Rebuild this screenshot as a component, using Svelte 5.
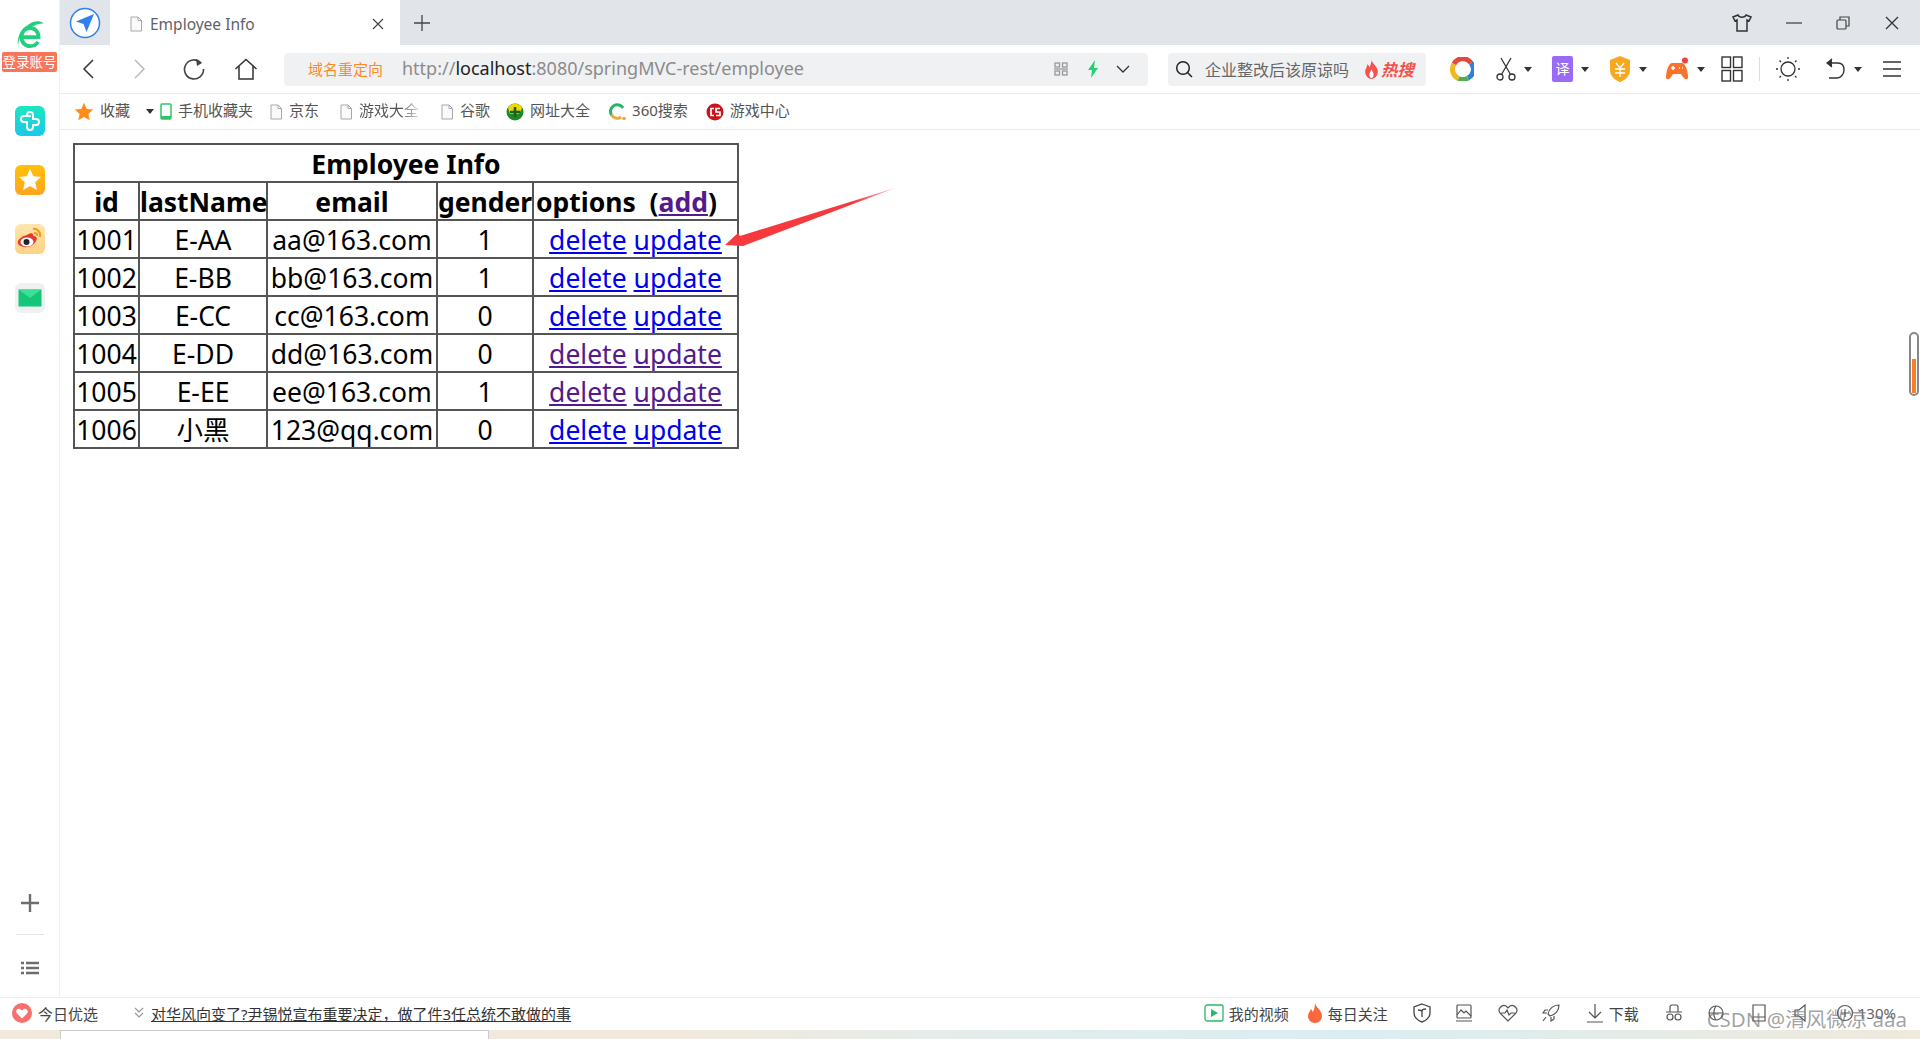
<script>
  const rows = [
    { id: 1001, name: "E-AA", email: "aa@163.com", gender: 1, seen: false },
    { id: 1002, name: "E-BB", email: "bb@163.com", gender: 1, seen: false },
    { id: 1003, name: "E-CC", email: "cc@163.com", gender: 0, seen: false },
    { id: 1004, name: "E-DD", email: "dd@163.com", gender: 0, seen: true },
    { id: 1005, name: "E-EE", email: "ee@163.com", gender: 1, seen: true },
    { id: 1006, name: "小黑", email: "123@qq.com", gender: 0, seen: false }
  ];
</script>

{#snippet doc()}
  <svg class="doc" width="14" height="16" viewBox="0 0 14 16"><path d="M2 1h7l3.500 3.500V15H2z M9 1v3.500h3.500" fill="#fafafa" stroke="#a8a8a8"/></svg>
{/snippet}

{#snippet caret()}
  <svg class="caret" width="8" height="5" viewBox="0 0 8 5"><path d="M0 0h8L4 5z" fill="#333"/></svg>
{/snippet}

<div class="page">
  <div class="body">
    <aside class="side">
      <div class="logo">
        <svg width="32" height="32" viewBox="0 0 30 30">
          <path d="M7.500 16h15.500c0-5-3.500-8.500-8-8.500S7 11 7 16c0 5 3.500 8.500 8 8.500 3.500 0 6-1.500 7.500-4" fill="none" stroke="#22cf7e" stroke-width="3.600"/>
          <path d="M5 28C1 19 10 5 28 3 23 0 18 1 14 4 5 9 1 20 5 28z" fill="#22cf7e"/>
        </svg>
        <span class="login">登录账号</span>
      </div>
      <div class="app teal">
        <svg width="24" height="24" viewBox="0 0 24 24" fill="none" stroke="#fff" stroke-width="2"><path d="M9 7V6a3 3 0 0 1 6 0v4h3a3 3 0 0 1 0 6h-3v2a3 3 0 0 1-6 0v-5H6a3 3 0 0 1 0-6h7"/></svg>
      </div>
      <div class="app amber">
        <svg width="24" height="24" viewBox="0 0 24 24"><path d="M12 1l3.300 7.300 7.700.8-5.800 5.200 1.700 7.700L12 18l-6.900 4 1.700-7.700L1 9.100l7.700-.8z" fill="#fff"/></svg>
      </div>
      <div class="app weibo">
        <svg width="28" height="28" viewBox="0 0 28 28">
          <path d="M11 10c4-3 7-2 6 1 3 0 5 2 3 5-2 4-7 7-12 6-5-1-7-3-6-6 1-2 4-5 9-6z" fill="#e6392d"/>
          <ellipse cx="11" cy="17" rx="6.500" ry="4.500" fill="#fff"/>
          <circle cx="10.500" cy="17" r="3" fill="#222"/>
          <path d="M17 4c4-1 8 3 7 8M18 8c2-.5 3.500 1 3 3" fill="none" stroke="#f59a1c" stroke-width="2"/>
        </svg>
      </div>
      <div class="app mail">
        <svg width="24" height="18" viewBox="0 0 24 18"><rect width="23" height="17" x=".5" y=".5" fill="#15c57a"/><path d="M.5.500h23L12 9z" fill="#3ddf94"/></svg>
      </div>
      <div class="side-foot">
        <svg width="20" height="20" viewBox="0 0 20 20"><path d="M10 1v18M1 10h18" stroke="#6c6c6c" stroke-width="2.400"/></svg>
        <hr />
        <svg width="18" height="14" viewBox="0 0 18 14"><path d="M0 2h3M5 2h13M0 7h3M5 7h13M0 12h3M5 12h13" stroke="#6c6c6c" stroke-width="2.400"/></svg>
      </div>
    </aside>

    <div class="browser">
      <div class="tabs">
        <div class="nav-btn">
          <svg width="32" height="32" viewBox="0 0 32 32"><circle cx="16" cy="16" r="14.500" fill="#fff" stroke="#2f80ed" stroke-width="1.500"/><path d="M25 7L7 14.500l7.500 2.500 3 8z" fill="#2f80ed"/></svg>
        </div>
        <div class="tab">
          {@render doc()}
          <span class="tab-title">Employee Info</span>
          <svg class="tab-x" width="12" height="12" viewBox="0 0 12 12"><path d="M1 1l10 10M11 1L1 11" stroke="#444" stroke-width="1.200"/></svg>
        </div>
        <svg class="plus" width="18" height="18" viewBox="0 0 18 18"><path d="M9 1v16M1 9h16" stroke="#444" stroke-width="1.300"/></svg>
        <div class="win">
          <svg width="20" height="18" viewBox="0 0 20 18" fill="none" stroke="#333" stroke-width="1.500"><path d="M6 1L1 3l2 4 2-1v11h10V6l2 1 2-4-5-2c-1 3-7 3-8 0z"/></svg>
          <svg width="16" height="16" viewBox="0 0 16 16"><path d="M0 8h16" stroke="#444" stroke-width="1.300"/></svg>
          <svg width="14" height="14" viewBox="0 0 14 14" fill="none" stroke="#444" stroke-width="1.200"><rect x="1" y="4" width="9" height="9" rx="1"/><path d="M4 4V1h9v9h-3"/></svg>
          <svg width="16" height="16" viewBox="0 0 16 16"><path d="M2 2l12 12M14 2L2 14" stroke="#333" stroke-width="1.300"/></svg>
        </div>
      </div>

      <div class="toolbar">
        <svg class="back" width="14" height="20" viewBox="0 0 14 20"><path d="M12 1L3 10l9 9" fill="none" stroke="#333" stroke-width="1.500"/></svg>
        <svg class="fwd" width="14" height="20" viewBox="0 0 14 20"><path d="M2 1l9 9-9 9" fill="none" stroke="#bbb" stroke-width="1.500"/></svg>
        <svg class="reload" width="22" height="22" viewBox="0 0 22 22"><path d="M18 5a9.500 9.500 0 1 0 2.500 6" fill="none" stroke="#444" stroke-width="1.600"/><path d="M13 1l6 4-5 3z" fill="#444"/></svg>
        <svg class="home" width="24" height="22" viewBox="0 0 24 22"><path d="M1.500 11L12 1.500 22.500 11M5 8v13h14V8" fill="none" stroke="#333" stroke-width="1.500"/></svg>
        <div class="url">
          <span class="redirect">域名重定向</span>
          <span class="addr">http://<b>localhost</b>:8080/springMVC-rest/employee</span>
          <svg class="qr" width="14" height="14" viewBox="0 0 14 14" fill="none" stroke="#999" stroke-width="1.300"><rect x="1" y="1" width="4.500" height="4"/><rect x="8.500" y="1" width="4.500" height="4"/><rect x="1" y="9" width="4.500" height="4"/><rect x="8.500" y="9" width="4.500" height="4"/><path d="M0 7h14"/></svg>
          <svg class="bolt" width="12" height="18" viewBox="0 0 12 18"><path d="M8 0L1 10h4l-1 8 7-10H7z" fill="#27d170"/></svg>
          <svg class="down" width="14" height="8" viewBox="0 0 14 8"><path d="M1 1l6 6 6-6" fill="none" stroke="#333" stroke-width="1.300"/></svg>
        </div>
        <div class="search">
          <svg width="18" height="18" viewBox="0 0 18 18"><circle cx="8" cy="8" r="6.300" fill="none" stroke="#222" stroke-width="1.500"/><path d="M12.500 12.500L17 17" stroke="#222" stroke-width="1.500"/></svg>
          <span class="query">企业整改后该原谅吗</span>
          <svg width="15" height="19" viewBox="0 0 14 18"><path d="M7 0c1 4 6 6 6 11 0 4-3 7-6 7s-6-3-6-7c0-3 2-4 2-7 1 1 2 2 2 3 1-2 2-4 2-7z" fill="#f4524d"/><path d="M7 9c1 2 2 3 2 5s-1 3-2 3-2-1-2-3 1-3 2-5z" fill="#fff"/></svg>
          <span class="hot">热搜</span>
        </div>
        <div class="tools">
          <svg class="ring" width="24" height="24" viewBox="0 0 24 24" fill="none" stroke-width="5">
            <path d="M4 7a10 10 0 0 1 17-1" stroke="#e2493b"/><path d="M21 6a9.500 9.500 0 0 1-3 15" stroke="#2f7fe0"/><path d="M18 21a9.500 9.500 0 0 1-9.500 .5" stroke="#4fb04f"/><path d="M8.500 21.500A10 10 0 0 1 4 7" stroke="#f2b824"/>
          </svg>
          <div class="tool">
            <svg width="20" height="24" viewBox="0 0 20 24" fill="none" stroke="#333" stroke-width="1.300"><circle cx="4" cy="20" r="3"/><circle cx="16" cy="20" r="3"/><path d="M5.500 17.500L15 1M14.500 17.500L5 1"/></svg>
            {@render caret()}
          </div>
          <div class="tool">
            <span class="trans">译</span>
            {@render caret()}
          </div>
          <div class="tool">
            <svg width="22" height="26" viewBox="0 0 22 26"><path d="M11 0l10 4v10c0 6-5 10-10 12C6 24 1 20 1 14V4z" fill="#f6a821"/><path d="M7 7l4 5 4-5M6 13h10M6 17h10M11 12v9" fill="none" stroke="#fff" stroke-width="1.400"/></svg>
            {@render caret()}
          </div>
          <div class="tool">
            <svg width="24" height="24" viewBox="0 0 24 24"><path d="M7 6h10c4 0 6 10 6 14 0 3-3 3-5 0l-2-3H8l-2 3c-2 3-5 3-5 0C1 16 3 6 7 6z" fill="#f9742a"/><circle cx="20" cy="3.500" r="3" fill="#f0403c"/><path d="M6 11h4M8 9v4M14 11h1M17 11h1" stroke="#fff" stroke-width="1.500"/></svg>
            {@render caret()}
          </div>
          <svg class="grid" width="22" height="26" viewBox="0 0 22 26" fill="none" stroke="#333" stroke-width="1.400"><rect x="1" y="1" width="8.500" height="10.500"/><rect x="12.500" y="1" width="8.500" height="10.500"/><rect x="1" y="14.500" width="8.500" height="10.500"/><rect x="12.500" y="14.500" width="8.500" height="10.500"/></svg>
          <span class="sep"></span>
          <svg class="sun" width="24" height="24" viewBox="0 0 24 24" fill="none" stroke="#333" stroke-width="1.300"><circle cx="12" cy="12" r="7"/><path d="M12 0v2M12 22v2M0 12h2M22 12h2M3.500 3.500l1.500 1.500M19 19l1.500 1.500M3.500 20.500L5 19M19 5l1.500-1.500"/></svg>
          <div class="tool undo">
            <svg width="20" height="24" viewBox="0 0 20 24" fill="none" stroke="#333" stroke-width="1.400"><path d="M4 6h8c4 0 6 3 6 7s-3 8-7 8H3"/><path d="M6 2L1 6l5 4" fill="#333"/></svg>
            {@render caret()}
          </div>
          <svg class="menu" width="18" height="18" viewBox="0 0 18 18"><path d="M0 2h18M0 9h18M0 16h18" stroke="#333" stroke-width="1.400"/></svg>
        </div>
      </div>

      <div class="bookmarks">
        <svg width="20" height="20" viewBox="0 0 24 24"><path d="M12 1l3.300 7.300 7.700.8-5.800 5.200 1.700 7.700L12 18l-6.900 4 1.700-7.700L1 9.100l7.700-.8z" fill="#ff8c1a"/></svg>
        <span class="mark">收藏</span>
        <span class="mini">{@render caret()}</span>
        <svg width="12" height="17" viewBox="0 0 12 17"><rect x="1" y="1" width="10" height="15" rx="1" fill="#fff" stroke="#2ec56b" stroke-width="1.500"/><path d="M1 13h10v3H1z" fill="#2ec56b"/></svg>
        <span class="mark short">手机收藏夹</span>
        {@render doc()}
        <span class="mark wide">京东</span>
        {@render doc()}
        <span class="mark fade wider">游戏大全</span>
        {@render doc()}
        <span class="mark short">谷歌</span>
        <svg width="18" height="18" viewBox="0 0 18 18"><circle cx="9" cy="9" r="8.500" fill="#1c8a22"/><path d="M2 5a8 8 0 0 1 14 0l-3 6H4z" fill="#f0d800"/><path d="M9 4v10M4 9h10" stroke="#1b5e20" stroke-width="2.600"/></svg>
        <span class="mark">网址大全</span>
        <svg width="18" height="18" viewBox="0 0 18 18"><path d="M3.500 12A6.500 6.500 0 0 1 15 5" fill="none" stroke="#27b36a" stroke-width="3"/><path d="M3.500 12A6.500 6.500 0 0 0 13 14" fill="none" stroke="#f3a43a" stroke-width="3"/><circle cx="16" cy="15.500" r="1.800" fill="#f3a43a"/></svg>
        <span class="mark">360搜索</span>
        <svg width="18" height="18" viewBox="0 0 18 18"><circle cx="9" cy="9" r="8.500" fill="#c9141e"/><path d="M8 5.500H5v7h3M14 5.500h-4v3.500h4v3.500h-4" fill="none" stroke="#fff" stroke-width="1.700"/></svg>
        <span class="mark">游戏中心</span>
      </div>

      <main class="content">
        <table>
          <colgroup>
            <col class="c-id" /><col class="c-name" /><col class="c-mail" /><col class="c-gender" /><col />
          </colgroup>
          <thead>
            <tr><th colspan="5">Employee Info</th></tr>
            <tr>
              <th>id</th><th>lastName</th><th>email</th><th>gender</th>
              <th class="opts">options&nbsp; (<a class="seen" href="#add">add</a>)</th>
            </tr>
          </thead>
          <tbody>
            {#each rows as row}
              <tr>
                <td>{row.id}</td>
                <td>{row.name}</td>
                <td>{row.email}</td>
                <td>{row.gender}</td>
                <td>
                  <a class:seen={row.seen} href="#delete">delete</a>
                  <a class:seen={row.seen} href="#update">update</a>
                </td>
              </tr>
            {/each}
          </tbody>
        </table>
        <svg class="arrow" width="172" height="60" viewBox="0 0 172 60">
          <defs>
            <linearGradient id="fade" x1="0" x2="1" y1="0" y2="0">
              <stop offset="0.75" stop-color="#f5393c" />
              <stop offset="1" stop-color="#f5393c" stop-opacity="0.4" />
            </linearGradient>
          </defs>
          <path d="M0 57L13 45 15 48 170 0 18 58z" fill="url(#fade)"/>
        </svg>
        <div class="thumb"><span></span></div>
      </main>
    </div>
  </div>

  <footer class="status">
    <svg class="heart" width="20" height="20" viewBox="0 0 20 20"><circle cx="10" cy="10" r="10" fill="#f8706c"/><path d="M10 15.500L4.800 10.300C3 8 5.500 4.800 8 6c1 .5 2 1.500 2 1.500S11 6.500 12 6c2.500-1.200 5 2 3.200 4.300z" fill="#fff"/></svg>
    <span class="pick">今日优选</span>
    <svg class="dbl" width="10" height="12" viewBox="0 0 10 12"><path d="M1 1l4 4 4-4M1 6l4 4 4-4" fill="none" stroke="#999" stroke-width="1.200"/></svg>
    <a class="news" href="#news">对华风向变了?尹锡悦宣布重要决定，做了件3任总统不敢做的事</a>
    <div class="status-right">
      <svg width="20" height="18" viewBox="0 0 20 18"><rect x="1" y="1" width="18" height="16" rx="2" fill="#fff" stroke="#27b86a" stroke-width="1.300"/><path d="M7 5l7 4-7 4z" fill="#27b86a"/></svg>
      <span class="s-text">我的视频</span>
      <svg class="m18" width="16" height="20" viewBox="0 0 16 20"><path d="M8 0c1 5 7 7 7 13 0 4-3 7-7 7s-7-3-7-7c0-3 2-5 3-7 1 1 1 2 2 3 1-3 2-5 2-9z" fill="#f9683a"/></svg>
      <span class="s-text">每日关注</span>
      <svg class="m25" width="18" height="20" viewBox="0 0 18 20" fill="none" stroke="#444" stroke-width="1.300"><path d="M9 1l8 3v6c0 4-4 8-8 9-4-1-8-5-8-9V4z"/><path d="M9 14V8M5 7c2 0 4 0 4 2M13 6c-2 0-4 0-4 2"/></svg>
      <svg class="m24" width="18" height="20" viewBox="0 0 18 20" fill="none" stroke="#555" stroke-width="1.200"><rect x="2" y="2" width="14" height="13" rx="1"/><path d="M2 12l4-5 3 3 2-2 5 5M1 18h16"/></svg>
      <svg class="m25" width="20" height="18" viewBox="0 0 20 18" fill="none" stroke="#555" stroke-width="1.200"><path d="M10 17L2 9C-1 5 4 0 8 2l2 2 2-2c4-2 9 3 6 7z"/><path d="M3 9h4l2-3 2 5 2-2h4"/></svg>
      <svg class="m24" width="18" height="18" viewBox="0 0 18 18" fill="none" stroke="#555" stroke-width="1.200"><path d="M17 1c-6 0-10 4-11 9l2 2c5-1 9-5 9-11zM6 6H3L1 9h4M12 12v3l-3 2v-4M4 13l-3 4"/></svg>
      <svg class="m26" width="18" height="20" viewBox="0 0 18 20" fill="none" stroke="#555" stroke-width="1.200"><path d="M9 1v13M3 9l6 6 6-6M1 19h16"/></svg>
      <span class="s-text">下载</span>
      <svg class="m26" width="18" height="18" viewBox="0 0 18 18" fill="none" stroke="#555" stroke-width="1.200"><path d="M5 8V3a2 2 0 0 1 2-2h4a2 2 0 0 1 2 2v5M1 8h16"/><circle cx="5" cy="13" r="3"/><circle cx="13" cy="13" r="3"/></svg>
      <svg class="m24" width="18" height="18" viewBox="0 0 18 18" fill="none" stroke="#555" stroke-width="1.200"><circle cx="9" cy="9" r="7"/><path d="M2 9h14M9 2c-3 4-3 10 0 14"/></svg>
      <svg class="m27" width="14" height="18" viewBox="0 0 14 18" fill="none" stroke="#555" stroke-width="1.200"><path d="M1 1h12v16H1zM1 13h12"/></svg>
      <svg class="m28" width="14" height="18" viewBox="0 0 14 18" fill="none" stroke="#555" stroke-width="1.200"><path d="M1 6h4l6-5v16l-6-5H1z"/></svg>
      <svg class="m28" width="18" height="18" viewBox="0 0 18 18" fill="none" stroke="#555" stroke-width="1.200"><circle cx="9" cy="9" r="7.500"/><path d="M9 5v8M5 9h8"/></svg>
      <span class="zoom">130%</span>
    </div>
    <span class="mark-csdn">CSDN @清风微凉 aaa</span>
  </footer>

  <div class="strip"><div class="strip-box"></div></div>
</div>

<style>
  :global(body) {
    margin: 0;
    overflow: hidden;
    background: #fff;
  }
  .page {
    width: 1920px;
    height: 1039px;
    display: flex;
    flex-direction: column;
    font-family: "Noto Sans", "Noto Sans CJK SC", sans-serif;
    color: #555;
  }
  .body {
    flex: 1;
    display: flex;
    min-height: 0;
  }
  .side {
    width: 59px;
    border-right: 1px solid #f0f0f0;
    display: flex;
    flex-direction: column;
    align-items: center;
    box-sizing: content-box;
  }
  .logo {
    height: 72px;
    padding-top: 20px;
    box-sizing: border-box;
    display: flex;
    flex-direction: column;
    align-items: center;
    margin-bottom: 34px;
  }
  .login {
    background: #f97459;
    color: #fff;
    font-size: 13.500px;
    line-height: 20px;
    width: 55px;
    text-align: center;
    white-space: nowrap;
    border-radius: 2px;
  }
  .app {
    width: 30px;
    height: 30px;
    border-radius: 6px;
    display: flex;
    align-items: center;
    justify-content: center;
    margin-bottom: 29px;
  }
  .teal { background: linear-gradient(#1ce6c0, #1bc8ea); }
  .amber { background: linear-gradient(#ffc107, #ffa51f); }
  .weibo { background: linear-gradient(#ffe6b0, #ffd184); }
  .mail { background: #f0f0f0; }
  .side-foot {
    margin-top: auto;
    padding-bottom: 22px;
    display: flex;
    flex-direction: column;
    align-items: center;
  }
  .side-foot hr {
    width: 28px;
    border: 0;
    border-top: 1px solid #e4e4e4;
    margin: 21px 0 26px;
  }

  .browser {
    flex: 1;
    display: flex;
    flex-direction: column;
    min-width: 0;
  }
  .tabs {
    height: 45px;
    background: #e1e4e9;
    display: flex;
    align-items: center;
  }
  .nav-btn {
    width: 50px;
    display: flex;
    justify-content: center;
  }
  .tab {
    width: 290px;
    height: 45px;
    background: #fff;
    display: flex;
    align-items: center;
    padding: 3px 16px 0 19px;
    box-sizing: border-box;
  }
  .tab-title {
    font-size: 15.500px;
    color: #5f6368;
    margin-left: 7px;
    flex: 1;
  }
  .plus {
    margin-left: 13px;
  }
  .win {
    margin-left: auto;
    display: flex;
    align-items: center;
    gap: 34px;
    padding-right: 20px;
  }
  .toolbar {
    height: 48px;
    border-bottom: 1px solid #eaeaea;
    display: flex;
    align-items: center;
    box-sizing: content-box;
  }
  .back { margin-left: 21px; }
  .fwd { margin-left: 38px; }
  .reload { margin-left: 36px; }
  .home { margin-left: 29px; }
  .url {
    width: 864px;
    height: 33px;
    margin-left: 26px;
    background: #f0f1f3;
    border-radius: 4px;
    display: flex;
    align-items: center;
    box-sizing: border-box;
    padding-left: 24px;
  }
  .redirect {
    font-size: 15px;
    color: #ff8a1f;
    width: 94px;
    margin-top: -2px;
  }
  .addr {
    font-size: 18px;
    color: #8b8b8b;
    white-space: nowrap;
    width: 652px;
    margin-top: -2px;
  }
  .addr b {
    font-weight: 400;
    color: #222;
  }
  .bolt { margin-left: 19px; }
  .down { margin-left: 17px; }
  .search {
    width: 258px;
    height: 33px;
    margin-left: 20px;
    background: #f0f1f3;
    border-radius: 4px;
    display: flex;
    align-items: center;
    padding-left: 7px;
    box-sizing: border-box;
  }
  .query {
    font-size: 16px;
    color: #666;
    margin: 0 15px 0 12px;
    white-space: nowrap;
  }
  .hot {
    font-size: 16.500px;
    font-weight: 700;
    font-style: italic;
    color: #f4524d;
    margin-left: 2px;
  }
  .tools {
    display: flex;
    align-items: center;
    margin-left: 24px;
  }
  .tool {
    display: flex;
    align-items: center;
    gap: 8px;
    width: 57px;
    justify-content: center;
  }
  .ring { margin-right: 11px; }
  .trans {
    width: 21px;
    height: 26px;
    background: #9a6cf5;
    color: #fff;
    font-size: 14px;
    line-height: 26px;
    text-align: center;
    border-radius: 2px;
  }
  .grid { margin-left: 8px; }
  .sep {
    width: 1px;
    height: 24px;
    background: #dedede;
    margin: 0 16px;
  }
  .undo { margin-left: 15px; }
  .menu { margin-left: 11px; }
  .bookmarks {
    height: 35px;
    border-bottom: 1px solid #eaeaea;
    display: flex;
    align-items: center;
    padding-left: 14px;
    gap: 6px;
    box-sizing: content-box;
  }
  .mark {
    font-size: 15px;
    line-height: 32px;
    margin-top: -3px;
    color: #555;
    margin-right: 12px;
    white-space: nowrap;
  }
  .short { margin-right: 10px; }
  .wide { margin-right: 14px; }
  .wider { margin-right: 15px; }
  .mini { display: flex; margin: 0 0 0 -2px; }
  .fade {
    color: transparent;
    background: linear-gradient(90deg, #555 70%, #ddd);
    background-clip: text;
    -webkit-background-clip: text;
  }

  .content {
    flex: 1;
    position: relative;
    padding: 13px 0 0 13px;
    min-height: 0;
  }
  table {
    border-collapse: collapse;
    table-layout: fixed;
    width: 666px;
    border: 2px solid #333;
    color: #000;
    font-size: 26.500px;
  }
  th, td {
    border: 2px solid #555;
    height: 34px;
    padding: 2px 0 0;
    text-align: center;
    line-height: 32px;
    white-space: nowrap;
    overflow: visible;
  }
  th { font-weight: 700; }
  th.opts {
    text-align: left;
    padding-left: 2px;
  }
  .c-id { width: 65px; }
  .c-name { width: 128px; }
  .c-mail { width: 170px; }
  .c-gender { width: 96px; }
  a {
    color: #0000ee;
    text-decoration: underline;
  }
  a.seen { color: #551a8b; }
  .arrow {
    position: absolute;
    left: 665px;
    top: 58px;
  }
  .thumb {
    position: absolute;
    right: 1px;
    top: 202px;
    width: 10px;
    height: 64px;
    box-sizing: border-box;
    border: 2.500px solid #888;
    border-radius: 5px;
    display: flex;
    align-items: flex-end;
    justify-content: center;
  }
  .thumb span {
    width: 4px;
    height: 34px;
    background: #ff7a2a;
    margin-bottom: 1px;
  }

  .status {
    height: 33px;
    border-top: 1px solid #eee;
    display: flex;
    align-items: center;
    font-size: 15px;
    position: relative;
    box-sizing: border-box;
    padding-bottom: 2px;
  }
  .heart { margin-left: 12px; }
  .pick { margin-left: 6px; color: #444; }
  .dbl { margin-left: 36px; }
  .news {
    margin-left: 7px;
    color: #333;
    white-space: nowrap;
  }
  .status-right {
    margin-left: auto;
    padding-right: 24px;
    display: flex;
    align-items: center;
  }
  .s-text { margin-left: 5px; color: #444; white-space: nowrap; }
  .m18 { margin-left: 18px; }
  .m24 { margin-left: 24px; }
  .m25 { margin-left: 25px; }
  .m26 { margin-left: 26px; }
  .m27 { margin-left: 27px; }
  .m28 { margin-left: 28px; }
  .zoom { margin-left: 4px; color: #666; white-space: nowrap; }
  .mark-csdn {
    position: absolute;
    right: 13px;
    top: 7px;
    font-size: 20.500px;
    line-height: 28px;
    color: rgba(110, 110, 110, 0.65);
    white-space: nowrap;
  }
  .strip {
    height: 9px;
    background: linear-gradient(90deg, #f1e9dc 0, #f1e9dc 35%, #e4ecea 50%, #d9eef2 70%, #f0e9dc 100%);
    padding-left: 60px;
  }
  .strip-box {
    width: 429px;
    height: 9px;
    background: #fff;
    box-sizing: border-box;
    border: 1px solid #ccc;
    border-bottom: 0;
  }
  .doc { flex: none; }
  .caret { flex: none; }
</style>
